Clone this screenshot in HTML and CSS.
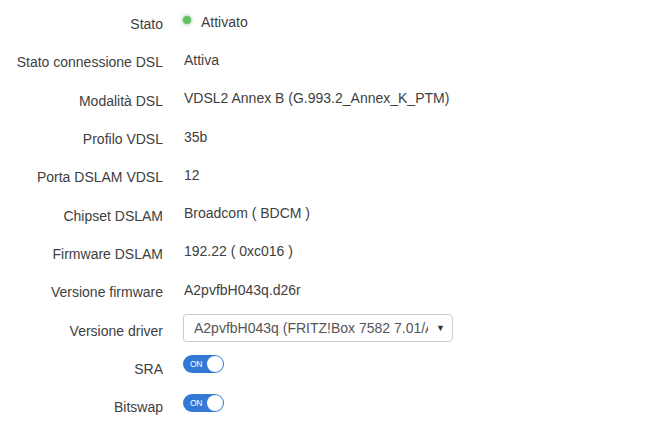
FILE: index.html
```html
<!DOCTYPE html>
<html lang="it">
<head>
<meta charset="utf-8">
<title>Stato DSL</title>
<link rel="stylesheet" href="styles.css">
</head>
<body>
<div class="form">
  <div class="row">
    <div class="label">Stato</div>
    <div class="value"><span class="dot"></span>Attivato</div>
  </div>
  <div class="row">
    <div class="label">Stato connessione DSL</div>
    <div class="value">Attiva</div>
  </div>
  <div class="row">
    <div class="label">Modalità DSL</div>
    <div class="value">VDSL2 Annex B (G.993.2_Annex_K_PTM)</div>
  </div>
  <div class="row">
    <div class="label">Profilo VDSL</div>
    <div class="value">35b</div>
  </div>
  <div class="row">
    <div class="label">Porta DSLAM VDSL</div>
    <div class="value">12</div>
  </div>
  <div class="row">
    <div class="label">Chipset DSLAM</div>
    <div class="value">Broadcom ( BDCM )</div>
  </div>
  <div class="row">
    <div class="label">Firmware DSLAM</div>
    <div class="value">192.22 ( 0xc016 )</div>
  </div>
  <div class="row">
    <div class="label">Versione firmware</div>
    <div class="value">A2pvfbH043q.d26r</div>
  </div>
  <div class="row">
    <div class="label">Versione driver</div>
    <div class="value">
      <div class="select">
        <span class="select-text">A2pvfbH043q (FRITZ!Box 7582 7.01/AVM)</span>
        <span class="caret">▼</span>
      </div>
    </div>
  </div>
  <div class="row">
    <div class="label">SRA</div>
    <div class="value"><span class="toggle"><span class="toggle-text">ON</span><span class="knob"></span></span></div>
  </div>
  <div class="row">
    <div class="label">Bitswap</div>
    <div class="value"><span class="toggle"><span class="toggle-text">ON</span><span class="knob"></span></span></div>
  </div>
</div>
</body>
</html>
```

FILE: styles.css
```css
html, body {
  margin: 0;
  padding: 0;
  background: #ffffff;
}
body {
  font-family: "Liberation Sans", Arial, sans-serif;
  font-size: 14px;
  line-height: 18px;
  color: #404040;
}
.form {
  padding-top: 2.5px;
  display: flex;
  flex-direction: column;
}
.row {
  height: 38.3px;
  display: grid;
  grid-template-columns: 163px 1fr;
  column-gap: 21px;
  align-items: center;
}
.label {
  text-align: right;
  padding-top: 5px;
  white-space: nowrap;
}
.value {
  display: flex;
  align-items: center;
  white-space: nowrap;
  min-width: 0;
}
.dot {
  width: 8px;
  height: 8px;
  border-radius: 50%;
  background: #62be62;
  box-shadow: 0 0 3px 1px rgba(92, 184, 92, 0.55);
  margin-left: -1px;
  margin-right: 10px;
  margin-top: -3px;
}
.select {
  width: 270px;
  height: 28px;
  box-sizing: border-box;
  border: 1px solid #cccccc;
  border-radius: 4px;
  margin-left: -1px;
  display: flex;
  align-items: center;
  padding-left: 10px;
  padding-right: 7px;
  color: #555555;
  background: #ffffff;
}
.select-text {
  flex: 1;
  min-width: 0;
  overflow: hidden;
  white-space: nowrap;
  text-overflow: clip;
}
.caret {
  flex: none;
  font-size: 9px;
  color: #333333;
  margin-left: 8px;
}
.toggle {
  width: 41px;
  height: 18px;
  border-radius: 9px;
  background: #3278d4;
  display: flex;
  align-items: center;
  justify-content: space-between;
  box-sizing: border-box;
  padding: 0 1px 0 7px;
  margin-left: -1px;
  margin-top: -4px;
}
.toggle-text {
  font-size: 9px;
  line-height: 10px;
  color: #ffffff;
  letter-spacing: -0.3px;
  transform: scaleX(0.95);
  transform-origin: left center;
}
.knob {
  width: 16px;
  height: 16px;
  border-radius: 50%;
  background: #ffffff;
}
```
